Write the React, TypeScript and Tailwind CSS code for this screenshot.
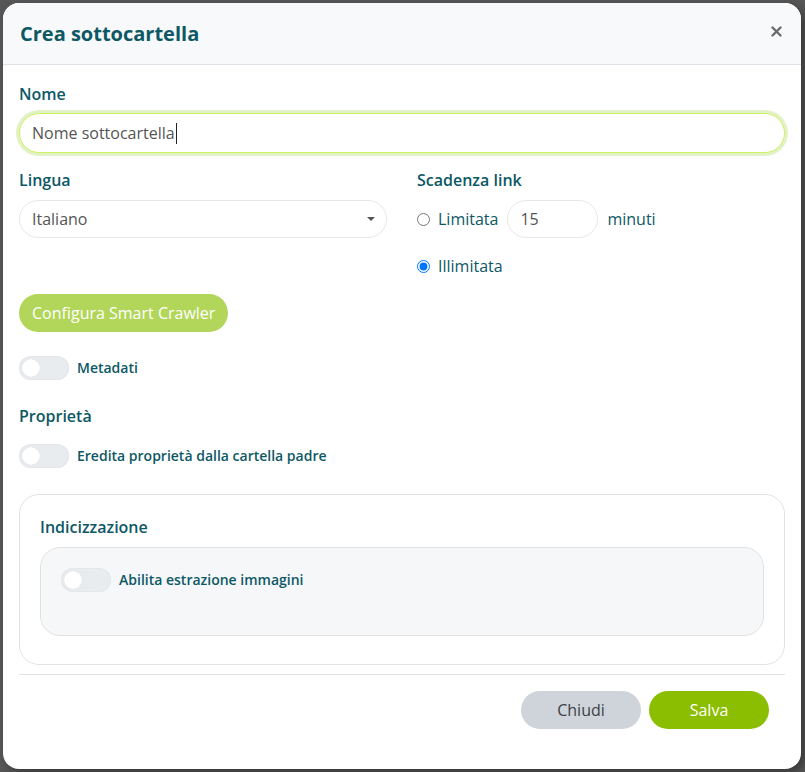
import React from "react";

const teal = "text-[#0d5865]";

function Toggle() {
  return (
    <div className="relative h-6 w-[50px] shrink-0 rounded-full bg-[#e9ecef] shadow-[inset_0_0_0_1px_#e3e6ea]">
      <div className="absolute left-[3px] top-[3px] h-[18px] w-[18px] rounded-full bg-white shadow-[0_0_1px_rgba(0,0,0,0.15)]" />
    </div>
  );
}

export default function App() {
  return (
    <div
      className="min-h-[772px] w-full bg-[#565656] p-[3px] pr-[4px]"
      style={{ fontFamily: '"Open Sans", "Liberation Sans", sans-serif' }}
    >
      <div className="flex h-[766px] w-[798px] flex-col overflow-hidden rounded-[16px] bg-white shadow-[4px_4px_8px_rgba(0,0,0,0.35)]">
        {/* Header */}
        <div className="flex h-[62px] shrink-0 items-center justify-between border-b border-[#dee2e6] bg-[#f8f9fa] pl-[17px] pr-[19px]">
          <h1 className={`text-[20px] font-bold leading-none ${teal}`}>Crea sottocartella</h1>
          <svg width="11" height="11" viewBox="0 0 11 11" className="mt-[-4px]">
            <path d="M1.5 1.5 L9.5 9.5 M9.5 1.5 L1.5 9.5" stroke="#6b6b6b" strokeWidth="2.4" strokeLinecap="round" />
          </svg>
        </div>

        {/* Body */}
        <div className="flex flex-col px-4 pt-[17px]">
          <label className={`h-6 text-base font-semibold leading-6 ${teal}`}>Nome</label>
          <div className="mt-[7px] flex h-10 items-center rounded-full border border-[#cbf25f] bg-white px-3 text-base text-[#555] ring-[3px] ring-[#e3f1c6]">
            Nome sottocartella
            <span className="ml-px inline-block h-[21px] w-px bg-[#222]" />
          </div>

          <div className="mt-[15px] grid grid-cols-2 gap-[30px]">
            <div className="flex flex-col">
              <label className={`h-6 text-base font-semibold leading-6 ${teal}`}>Lingua</label>
              <div className="mt-2 flex h-[38px] items-center justify-between rounded-full border border-[#e6e6e6] bg-white pl-3 pr-[11px] text-base text-[#555]">
                <span>Italiano</span>
                <svg width="8" height="4" viewBox="0 0 8 4">
                  <path d="M0 0 H8 L4 4 Z" fill="#555" />
                </svg>
              </div>
            </div>
            <div className="flex flex-col">
              <label className={`h-6 text-base font-semibold leading-6 ${teal}`}>Scadenza link</label>
              <div className="mt-2 flex h-[38px] items-center">
                <input type="radio" name="scad" className="h-[13px] w-[13px]" readOnly />
                <span className={`ml-2 text-base ${teal}`}>Limitata</span>
                <div className="ml-[9px] flex h-[38px] w-[91px] items-center rounded-full border border-[#e6e6e6] px-3 text-base text-[#555]">
                  15
                </div>
                <span className={`ml-[9px] text-base ${teal}`}>minuti</span>
              </div>
              <div className="mt-4 flex h-6 items-center">
                <input type="radio" name="scad" className="h-[13px] w-[13px]" defaultChecked />
                <span className={`ml-2 text-base ${teal}`}>Illimitata</span>
              </div>
            </div>
          </div>

          <div className="mt-4 flex">
            <button className="h-[38px] rounded-full bg-[#b2d65a] px-[13px] text-base font-medium text-white">
              Configura Smart Crawler
            </button>
          </div>

          <div className="mt-6 flex items-center gap-2">
            <Toggle />
            <span className={`text-sm font-semibold ${teal}`}>Metadati</span>
          </div>

          <label className={`mt-6 h-6 text-base font-semibold leading-6 ${teal}`}>Proprietà</label>
          <div className="mt-4 flex items-center gap-2">
            <Toggle />
            <span className={`text-sm font-semibold ${teal}`}>Eredita proprietà dalla cartella padre</span>
          </div>

          <div className="mt-[26px] h-[171px] rounded-[20px] border border-[#e2e2e2] pl-5 pr-5 pt-5">
            <label className={`block h-6 text-base font-semibold leading-6 ${teal}`}>Indicizzazione</label>
            <div className="mt-2 h-[89px] rounded-[20px] border border-[#e2e2e2] bg-[#f6f7f9] px-5 pt-5">
              <div className="flex items-center gap-2">
                <Toggle />
                <span className={`text-sm font-semibold ${teal}`}>Abilita estrazione immagini</span>
              </div>
            </div>
          </div>

          <div className="mt-[9px] h-px bg-[#e2e2e2]" />

          <div className="mt-4 flex justify-end gap-2 pr-[16px]">
            <button className="h-[38px] w-[120px] rounded-full bg-[#cfd4da] text-base text-[#3b4045]">Chiudi</button>
            <button className="h-[38px] w-[120px] rounded-full bg-[#8bbe00] text-base font-medium text-white">Salva</button>
          </div>
        </div>
      </div>
    </div>
  );
}
